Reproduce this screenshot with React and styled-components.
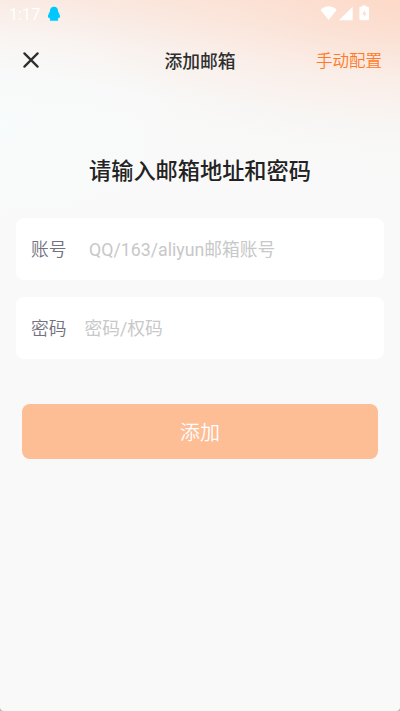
import React from 'react'
import styled, {createGlobalStyle} from 'styled-components'

const GlobalStyle = createGlobalStyle`
  * {
    box-sizing: border-box;
  }
  body {
    margin: 0;
    background: #b4b4b4;
    font-family: Roboto, "Noto Sans CJK SC", sans-serif;
  }
`
const Screen = styled.main`
  width: 400px;
  height: 711px;
  overflow: hidden;
  display: flex;
  flex-direction: column;
  border-radius: 0 0 4px 4px;
  background:
    radial-gradient(ellipse 330px 150px at 100% 0, rgba(255, 205, 180, 0.42), rgba(255, 212, 192, 0.18) 50%, rgba(255, 214, 194, 0) 100%),
    radial-gradient(ellipse 190px 100px at 0 125px, rgba(248, 252, 252, 0.8), rgba(248, 252, 252, 0) 100%),
    linear-gradient(187deg, #fce2d6 0, #fae9e1 40px, #f9f3f0 80px, #f8f8f7 125px, #f9f9f9 200px, #f9f9f9 100%);
`
const StatusBar = styled.div`
  height: 28px;
  padding: 0 30px 0 9px;
  display: flex;
  align-items: center;
  color: white;
`
const Clock = styled.span`
  width: 38px;
  padding-top: 1px;
  font-size: 16px;
  line-height: 28px;
  letter-spacing: 0.1px;
`
const StatusIcons = styled.div`
  margin-left: auto;
  display: flex;
`
const NavBar = styled.header`
  height: 64px;
  padding: 0 18px 0 23px;
  display: grid;
  grid-template-columns: 66px 1fr 66px;
  align-items: center;
`
const CloseButton = styled.button`
  width: 16px;
  height: 16px;
  padding: 0;
  border: none;
  background: none;
  display: flex;
`
const NavTitle = styled.h1`
  margin: 0 0 0 -5px;
  padding-top: 3px;
  text-align: center;
  font-size: 17.8px;
  line-height: 26px;
  font-weight: 500;
  color: #2e2e2e;
`
const ConfigLink = styled.a`
  padding-top: 4px;
  font-size: 16.5px;
  line-height: 24px;
  font-weight: 350;
  white-space: nowrap;
  color: #ff7a28;
`
const Heading = styled.h2`
  margin: 63px 0 31px;
  text-align: center;
  font-size: 22.2px;
  line-height: 32px;
  font-weight: 500;
  color: #222;
`
const Form = styled.form`
  padding: 0 16px;
  display: flex;
  flex-direction: column;
  gap: 17px;
`
const Field = styled.label`
  height: 62px;
  padding: 2px 15px 0;
  border-radius: 8px;
  background: white;
  display: flex;
  align-items: center;
  gap: ${props => props.$gap};
  font-size: 17.75px;
  line-height: 26px;
`
const FieldName = styled.span`
  font-weight: 350;
  color: #737080;
`
const Placeholder = styled.span`
  color: #c8c8c8;
`
const SubmitButton = styled.button`
  height: 55.5px;
  margin: 27.5px 6px 0;
  padding: 3px 0 0;
  border: none;
  border-radius: 8px;
  background: #fdbd95;
  color: white;
  font-family: inherit;
  font-size: 20px;
  line-height: 30px;
  font-weight: 350;
`

const PenguinIcon = () => (
  <svg width='14' height='16' viewBox='0 0 14 16'>
    <path fill='#00c8ff' d='M7 .8C4.2.8 2.9 2.7 2.9 5.5C2 7.3.9 9 .9 11c0 .9.6.9 1.5.4.2 1 .5 1.6.9 2.1-.5.3-.6.7-.4 1.2h8.2c.2-.5.1-.9-.4-1.2.4-.5.7-1.1.9-2.1.9.5 1.5.5 1.5-.4 0-2-1.1-3.7-2-5.5C11.1 2.7 9.8.8 7 .8z'/>
  </svg>
)

const StatusGlyphs = () => (
  <svg width='50' height='18' viewBox='0 0 50 18' fill='white'>
    <path d='M.6 4.9C5 .1 12.2.1 16.6 4.9L8.6 15z'/>
    <path d='M32.7 1.8V15.2H18.8z'/>
    <path fillRule='evenodd' d='M42.2.4h4v1.4h1.6c.7 0 1.2.5 1.2 1.2v11c0 .7-.5 1.2-1.2 1.2h-7.2c-.7 0-1.2-.5-1.2-1.2V3c0-.7.5-1.2 1.2-1.2h1.600zM44.8 4.900l-2.700 4.300h1.700v3.200l2.700-4.300h-1.700z'/>
  </svg>
)

const CloseIcon = () => (
  <svg width='16' height='16' viewBox='0 0 16 16'>
    <path d='M1.4 1.4l13.2 13.2M14.6 1.4L1.4 14.6' stroke='#2d2d2d' strokeWidth='2.2' strokeLinecap='round'/>
  </svg>
)

const App = () => {
  return (
    <Screen>
      <GlobalStyle/>
      <StatusBar>
        <Clock>1:17</Clock>
        <PenguinIcon/>
        <StatusIcons>
          <StatusGlyphs/>
        </StatusIcons>
      </StatusBar>
      <NavBar>
        <CloseButton type='button' aria-label='关闭'>
          <CloseIcon/>
        </CloseButton>
        <NavTitle>添加邮箱</NavTitle>
        <ConfigLink>手动配置</ConfigLink>
      </NavBar>
      <Heading>请输入邮箱地址和密码</Heading>
      <Form>
        <Field $gap='22.5px'>
          <FieldName>账号</FieldName>
          <Placeholder>QQ/163/aliyun邮箱账号</Placeholder>
        </Field>
        <Field $gap='18px'>
          <FieldName>密码</FieldName>
          <Placeholder>密码/权码</Placeholder>
        </Field>
        <SubmitButton type='button'>添加</SubmitButton>
      </Form>
    </Screen>
  )
}

export default App
